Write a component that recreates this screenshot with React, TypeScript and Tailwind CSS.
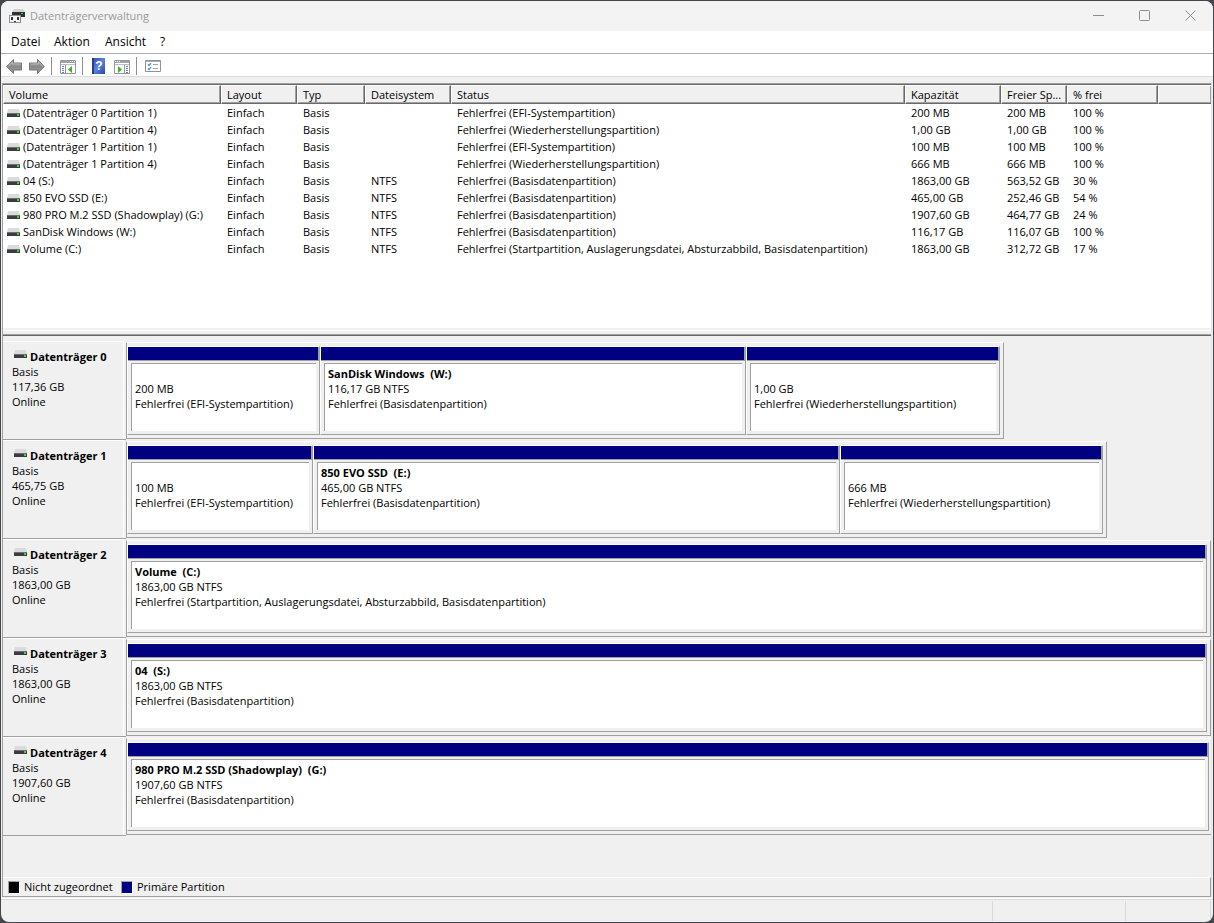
import { clsx } from "clsx";

type Volume = {
  name: string;
  fs: string;
  status: string;
  capacity: string;
  free: string;
  percent: string;
};

type Partition = {
  label?: string;
  size: string;
  status: string;
};

type Disk = {
  name: string;
  size: string;
  frame: string;
  columns: string;
  clipped?: boolean;
  partitions: Partition[];
};

const EFI = "Fehlerfrei (EFI-Systempartition)";
const RECOVERY = "Fehlerfrei (Wiederherstellungspartition)";
const DATA = "Fehlerfrei (Basisdatenpartition)";
const BOOT =
  "Fehlerfrei (Startpartition, Auslagerungsdatei, Absturzabbild, Basisdatenpartition)";

const volumes: Volume[] = [
  { name: "(Datenträger 0 Partition 1)", fs: "", status: EFI, capacity: "200 MB", free: "200 MB", percent: "100 %" },
  { name: "(Datenträger 0 Partition 4)", fs: "", status: RECOVERY, capacity: "1,00 GB", free: "1,00 GB", percent: "100 %" },
  { name: "(Datenträger 1 Partition 1)", fs: "", status: EFI, capacity: "100 MB", free: "100 MB", percent: "100 %" },
  { name: "(Datenträger 1 Partition 4)", fs: "", status: RECOVERY, capacity: "666 MB", free: "666 MB", percent: "100 %" },
  { name: "04 (S:)", fs: "NTFS", status: DATA, capacity: "1863,00 GB", free: "563,52 GB", percent: "30 %" },
  { name: "850 EVO SSD (E:)", fs: "NTFS", status: DATA, capacity: "465,00 GB", free: "252,46 GB", percent: "54 %" },
  { name: "980 PRO M.2 SSD (Shadowplay) (G:)", fs: "NTFS", status: DATA, capacity: "1907,60 GB", free: "464,77 GB", percent: "24 %" },
  { name: "SanDisk Windows (W:)", fs: "NTFS", status: DATA, capacity: "116,17 GB", free: "116,07 GB", percent: "100 %" },
  { name: "Volume (C:)", fs: "NTFS", status: BOOT, capacity: "1863,00 GB", free: "312,72 GB", percent: "17 %" },
];

const disks: Disk[] = [
  {
    name: "Datenträger 0",
    size: "117,36 GB",
    frame: "grid-cols-[878fr_207fr]",
    columns: "grid-cols-[193fr_426fr_254fr]",
    partitions: [
      { size: "200 MB", status: EFI },
      { label: "SanDisk Windows  (W:)", size: "116,17 GB NTFS", status: DATA },
      { size: "1,00 GB", status: RECOVERY },
    ],
  },
  {
    name: "Datenträger 1",
    size: "465,75 GB",
    frame: "grid-cols-[981fr_104fr]",
    columns: "grid-cols-[186fr_527fr_263fr]",
    partitions: [
      { size: "100 MB", status: EFI },
      { label: "850 EVO SSD  (E:)", size: "465,00 GB NTFS", status: DATA },
      { size: "666 MB", status: RECOVERY },
    ],
  },
  {
    name: "Datenträger 2",
    size: "1863,00 GB",
    frame: "grid-cols-1",
    columns: "grid-cols-1",
    partitions: [{ label: "Volume  (C:)", size: "1863,00 GB NTFS", status: BOOT }],
  },
  {
    name: "Datenträger 3",
    size: "1863,00 GB",
    frame: "grid-cols-1",
    columns: "grid-cols-1",
    partitions: [{ label: "04  (S:)", size: "1863,00 GB NTFS", status: DATA }],
  },
  {
    name: "Datenträger 4",
    size: "1907,60 GB",
    frame: "grid-cols-1",
    columns: "grid-cols-1",
    clipped: true,
    partitions: [
      { label: "980 PRO M.2 SSD (Shadowplay)  (G:)", size: "1907,60 GB NTFS", status: DATA },
    ],
  },
];

const columns = [
  { title: "Volume", width: "w-[218px]" },
  { title: "Layout", width: "w-[76px]" },
  { title: "Typ", width: "w-[68px]" },
  { title: "Dateisystem", width: "w-[86px]" },
  { title: "Status", width: "w-auto" },
  { title: "Kapazität", width: "w-[96px]" },
  { title: "Freier Sp...", width: "w-[66px]" },
  { title: "% frei", width: "w-[91px]" },
  { title: "", width: "w-[53px]" },
];

function DriveIcon() {
  return (
    <svg width="13" height="8" viewBox="0 0 13 8" className="shrink-0" aria-hidden="true">
      <path d="M1 0h11l1 4H0z" fill="#d9dbdd" />
      <path d="M0 4h13v4H0z" fill="#3a3c40" />
      <path d="M0 4h13v1H0z" fill="#6a6c70" />
      <rect x="10" y="5" width="2" height="2" fill="#2fe03a" />
    </svg>
  );
}

function AppIcon() {
  return (
    <svg width="16" height="16" viewBox="0 0 16 16" aria-hidden="true">
      <path d="M5 1h9l2 3H3z" fill="#d0d2d4" />
      <path d="M3 4h13v5H3z" fill="#2f3134" />
      <rect x="12" y="5" width="2" height="1" fill="#35e03d" />
      <path d="M0 7h12v8H0z" fill="#8d8f92" />
      <path d="M1 8h10v6H1z" fill="#f4f4f4" />
      <path d="M2 9h2v3H2zM8 9h2v3H8zM5 13h2v1H5z" fill="#303236" />
    </svg>
  );
}

function ArrowIcon({ flip }: { flip?: boolean }) {
  return (
    <svg width="16" height="16" viewBox="0 0 16 16" className={clsx(flip && "-scale-x-100")} aria-hidden="true">
      <defs>
        <linearGradient id={flip ? "fwd" : "back"} x1="0" y1="0" x2="0" y2="1">
          <stop offset="0" stopColor="#b4b4b4" />
          <stop offset=".5" stopColor="#8a8a8a" />
          <stop offset="1" stopColor="#9f9f9f" />
        </linearGradient>
      </defs>
      <path
        d="M.7 8.5 7.5 1.5v3.5h8v7h-8v3.5z"
        fill={flip ? "url(#fwd)" : "url(#back)"}
        stroke="#757575"
        strokeLinejoin="round"
      />
      <path d="M2.2 8.5 6.5 4v2h8" fill="none" stroke="#b8b8b8" />
    </svg>
  );
}

// Window with a tree pane; the mirrored one has the pane on the right
function PaneIcon({ right }: { right?: boolean }) {
  return (
    <svg width="16" height="14" viewBox="0 0 16 14" className={clsx(right && "-scale-x-100")} aria-hidden="true">
      <path d="M.5.5h15v13H.5z" fill="#fff" stroke="#9297a0" />
      <path d="M1 1h14v2H1z" fill="#9ea4ae" />
      <path d="M1 4.5h14" stroke="#b9bec6" />
      <path d="M10 1.5h1M12 1.5h1M14 1.5h1" stroke="#fff" />
      <path d="M5.5 5v8.5" stroke="#9297a0" />
      <path d="M2 6.5h2M2 8.5h2M2 10.5h2M2 12.5h2" stroke="#5e82ad" />
      <path d="M12 6v7L8 9.5z" fill="#3fb22c" />
    </svg>
  );
}

function HelpIcon() {
  return (
    <svg width="13" height="16" viewBox="0 0 13 16" aria-hidden="true">
      <defs>
        <linearGradient id="help" x1="0" y1="0" x2="1" y2="1">
          <stop offset="0" stopColor="#2c4db4" />
          <stop offset=".5" stopColor="#5c83e0" />
          <stop offset="1" stopColor="#2746aa" />
        </linearGradient>
      </defs>
      <path d="M0 0h13v16H0z" fill="url(#help)" />
      <path d="M0 0h2v16H0z" fill="#243f93" />
      <text
        x="7"
        y="12"
        textAnchor="middle"
        fill="#fff"
        fontSize="12"
        fontWeight="bold"
        fontFamily="Liberation Sans, sans-serif"
      >
        ?
      </text>
    </svg>
  );
}

function ChecklistIcon() {
  return (
    <svg width="16" height="12" viewBox="0 0 16 12" aria-hidden="true">
      <path d="M.5.5h15v11H.5z" fill="#fff" stroke="#8c929c" />
      <path d="M1 1h14v1H1z" fill="#a9afb9" />
      <path d="m3 4.5 1 1 2-2.5M3 8.5l1 1 2-2.5" fill="none" stroke="#2f8ae0" strokeWidth="1.2" />
      <path d="M8 4.5h5M8 8.5h5" stroke="#a3a8b0" />
    </svg>
  );
}

function TitleBar() {
  return (
    <header className="flex h-[30px] items-center bg-[#f3f3f3] pl-2 text-[#999]">
      <AppIcon />
      <h1 className="ml-[5px] flex-1">Datenträgerverwaltung</h1>
      <button type="button" aria-label="Minimieren" className="flex h-full w-[46px] items-center justify-center pb-0.5">
        <svg width="11" height="11" viewBox="0 0 11 11" stroke="#8c8c8c">
          <path d="M0 5.5h11" />
        </svg>
      </button>
      <button type="button" aria-label="Maximieren" className="flex h-full w-[46px] items-center justify-center pb-0.5">
        <svg width="11" height="11" viewBox="0 0 11 11" stroke="#8c8c8c" fill="none">
          <rect x=".5" y=".5" width="10" height="10" rx="1" />
        </svg>
      </button>
      <button type="button" aria-label="Schließen" className="flex h-full w-[46px] items-center justify-center pb-0.5">
        <svg width="11" height="11" viewBox="0 0 11 11" stroke="#8c8c8c">
          <path d="m.5.5 10 10M10.5.5l-10 10" />
        </svg>
      </button>
    </header>
  );
}

function Toolbar() {
  return (
    <div className="flex h-[23px] items-center border-b border-[#dcdcdc] bg-white pt-0.5 pl-[5px]">
      <button type="button" aria-label="Zurück">
        <ArrowIcon />
      </button>
      <button type="button" aria-label="Vorwärts" className="ml-[7px]">
        <ArrowIcon flip />
      </button>
      <span className="ml-1.5 h-[18px] w-px bg-[#8f8f8f]" />
      <button type="button" aria-label="Konsolenstruktur" className="ml-2 pt-0.5">
        <PaneIcon />
      </button>
      <span className="ml-1.5 h-[18px] w-px bg-[#8f8f8f]" />
      <button type="button" aria-label="Hilfe" className="ml-[9px]">
        <HelpIcon />
      </button>
      <button type="button" aria-label="Aktionsbereich" className="ml-[9px] pt-0.5">
        <PaneIcon right />
      </button>
      <span className="ml-1.5 h-[18px] w-px bg-[#8f8f8f]" />
      <button type="button" aria-label="Einstellungen" className="ml-2">
        <ChecklistIcon />
      </button>
    </div>
  );
}

function VolumeTable() {
  return (
    <div className="h-[245px] shrink-0 border-t border-[#a0a0a0] bg-white">
      <table className="w-full table-fixed border-separate border-spacing-0 border-t border-[#696969] text-left whitespace-nowrap">
        <thead>
          <tr>
            {columns.map((column, i) => (
              <th
                key={i}
                className={clsx(
                  "h-[19px] overflow-hidden border-b border-t border-l border-t-white border-l-white border-b-[#696969] bg-[#f0f0f0] p-0 pl-[5px] font-normal leading-4 shadow-[inset_-1px_-1px_0_#a0a0a0]",
                  column.width,
                  i < columns.length - 1 && "border-r border-r-[#696969]"
                )}
              >
                {column.title}
              </th>
            ))}
          </tr>
        </thead>
        <tbody>
          {volumes.map((volume) => (
            <tr key={volume.name} className="h-[17px] leading-[17px]">
              <td className="p-0 pl-1">
                <span className="flex items-center gap-[3px]">
                  <DriveIcon />
                  {volume.name}
                </span>
              </td>
              <td className="p-0 pl-1.5">Einfach</td>
              <td className="p-0 pl-1.5">Basis</td>
              <td className="p-0 pl-1.5">{volume.fs}</td>
              <td className="p-0 pl-1.5">{volume.status}</td>
              <td className="p-0 pl-1.5">{volume.capacity}</td>
              <td className="p-0 pl-1.5">{volume.free}</td>
              <td className="p-0 pl-1.5">{volume.percent}</td>
              <td className="p-0" />
            </tr>
          ))}
        </tbody>
      </table>
    </div>
  );
}

function PartitionBox({ partition }: { partition: Partition }) {
  return (
    <div className="flex min-w-0 flex-col border border-t-white border-r-[#a0a0a0] border-b-[#a0a0a0] border-l-white">
      <div className="h-3.5 border-r border-b border-[#a0a0a0] bg-[#000080]" />
      <div className="mx-[3px] mt-0.5 mb-[3px] flex-1 overflow-hidden border-t border-l border-[#a0a0a0] bg-white pt-0.5 pl-[3px] leading-[15px] whitespace-pre">
        <p className="h-[15px] font-bold">{partition.label}</p>
        <p>{partition.size}</p>
        <p>{partition.status}</p>
      </div>
    </div>
  );
}

function DiskRow({ disk }: { disk: Disk }) {
  return (
    <div className="grid h-[99px] grid-cols-[123px_minmax(0,1fr)]">
      <div className="border-b border-[#a0a0a0] pr-0.5">
        <div className="h-full border-t border-r border-white pt-[7px] pl-[9px] leading-[15px]">
          <h2 className="flex gap-[3px] pl-0.5 font-bold">
            <span className="pt-px">
              <DriveIcon />
            </span>
            {disk.name}
          </h2>
          <p>Basis</p>
          <p>{disk.size}</p>
          <p>Online</p>
        </div>
      </div>
      <div className={clsx("grid py-px", disk.frame)}>
        <div
          className={clsx(
            "grid min-w-0 border-t border-b border-l border-t-white border-b-[#a0a0a0] border-l-[#a0a0a0] py-[3px]",
            disk.clipped ? "pr-0.5" : "border-r border-r-[#a0a0a0] pr-[3px]",
            disk.columns
          )}
        >
          {disk.partitions.map((partition, i) => (
            <PartitionBox key={i} partition={partition} />
          ))}
        </div>
      </div>
    </div>
  );
}

function Legend() {
  return (
    <div className="flex h-5 items-center border-t border-r border-b border-t-white border-r-[#a0a0a0] border-b-[#a0a0a0] pl-[5px]">
      <span className="h-[13px] w-3 border border-t-[#a0a0a0] border-r-white border-b-white border-l-[#a0a0a0] bg-black" />
      <span className="ml-1 w-[97px]">Nicht zugeordnet</span>
      <span className="h-[13px] w-3 border border-t-[#a0a0a0] border-r-white border-b-white border-l-[#a0a0a0] bg-[#000080]" />
      <span className="ml-1">Primäre Partition</span>
    </div>
  );
}

export default function App() {
  return (
    <div className="flex min-h-screen flex-col bg-[#45464c] p-px font-['Open_Sans','Noto_Sans',sans-serif] text-[11px] leading-4 text-black">
      <div className="flex flex-1 flex-col overflow-hidden rounded-lg bg-[#f0f0f0]">
        <TitleBar />
        <nav className="flex h-[23px] items-center border-b border-[#a5adb9] bg-white pl-2.5 text-[12px]">
          <button type="button" className="w-[43px] text-left">Datei</button>
          <button type="button" className="w-[51px] text-left">Aktion</button>
          <button type="button" className="w-[55px] text-left">Ansicht</button>
          <button type="button">?</button>
        </nav>
        <Toolbar />

        <main className="mx-px mt-1.5 flex flex-1 flex-col border-r border-l border-r-[#e3e3e3] border-l-[#a0a0a0]">
          <VolumeTable />
          {/* Splitter between list and graphical view */}
          <div className="h-2 shrink-0 border-b border-[#696969] pt-0.5">
            <div className="h-[5px] border-t border-b border-t-white border-b-[#a0a0a0]" />
          </div>
          <div className="flex-1 pt-[5px]">
            {disks.map((disk) => (
              <DiskRow key={disk.name} disk={disk} />
            ))}
          </div>
          <Legend />
        </main>

        <footer className="mt-px h-6 shrink-0 border-t border-white">
          <div className="flex h-full justify-end border-t border-[#d9d9d9] py-px pr-0.5">
            <div className="w-[133px] border-l border-[#d9d9d9]" />
            <div className="w-[86px] border-r border-l border-[#d9d9d9]" />
          </div>
        </footer>
      </div>
    </div>
  );
}
